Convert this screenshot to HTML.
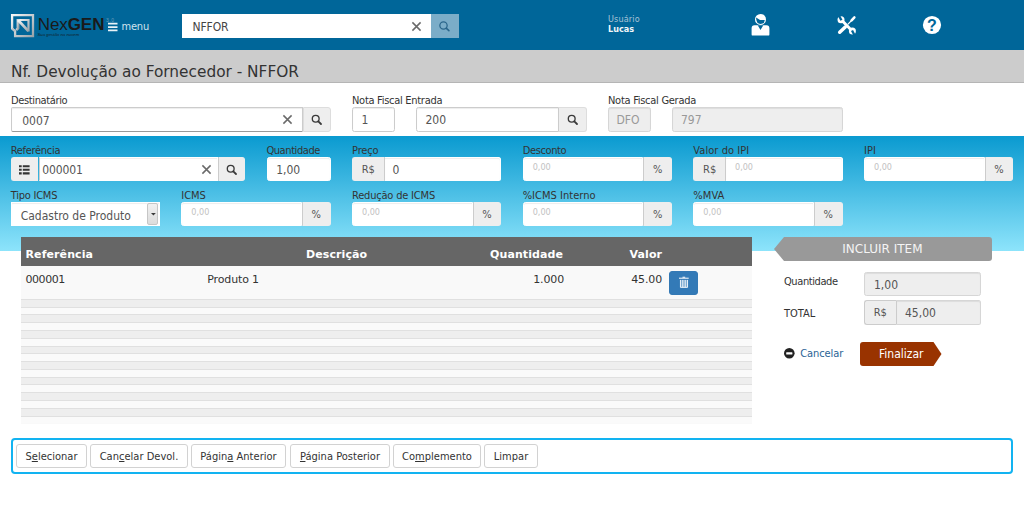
<!DOCTYPE html>
<html lang="pt-BR">
<head>
<meta charset="utf-8">
<title>Nf. Devolução ao Fornecedor - NFFOR</title>
<style>
*{box-sizing:border-box;margin:0;padding:0}
html,body{width:1024px;height:523px;overflow:hidden;background:#fff}
body{position:relative;font-variant-ligatures:none;font-family:"DejaVu Sans Condensed","Liberation Sans",sans-serif;font-size:11px;color:#333}
.abs{position:absolute}
#hdr{left:0;top:0;width:1024px;height:50px;background:#006699}
#titlebar{left:0;top:50px;width:1024px;height:33px;background:#cccccc;border-bottom:1px solid #b5b5b5}
#titlebar span{position:absolute;left:11px;top:11.500px;font-size:16.400px;line-height:20px;color:#333;white-space:nowrap;transform:scaleX(1.04);transform-origin:0 0;font-variant-ligatures:none}
#blue{left:0;top:136.200px;width:1024px;height:115px;background:linear-gradient(#0a9ad0,#8de4fb)}
.lbl{position:absolute;font-size:11px;line-height:13px;color:#333;white-space:nowrap;letter-spacing:-0.280px;font-variant-ligatures:none}
.inp{position:absolute;height:24.400px;background:#fff;border:1px solid #ccc;border-radius:2.500px;font-size:12px;line-height:24.600px;color:#555;padding-left:11px;white-space:nowrap;overflow:hidden;box-shadow:inset 0 1px 1px rgba(0,0,0,.075)}
.inp.dis{background:#eee;color:#999;border-color:#d6d6d6}
.inp.ph{color:#c2c2c2;font-size:9px;line-height:20px;padding-left:9px}
.add{position:absolute;height:24.400px;background:#eee;border:1px solid #ddd;font-size:11px;line-height:23px;color:#555;text-align:center}
.nl{border-top-left-radius:0;border-bottom-left-radius:0;border-left:0}
.nr{border-top-right-radius:0;border-bottom-right-radius:0}
.rl{border-radius:3px 0 0 3px;border-right:0}
.rr{border-radius:0 3px 3px 0;border-left:0}
.bl .inp,.bl .add{height:24px;border-color:#fff}
.bl .add{border-color:#eee;line-height:24px}
.bl .inp{line-height:25.500px}
.sq{border-radius:0}
.bl .inp.ph{line-height:18.500px}
svg{position:absolute;overflow:visible}
.btn{position:absolute;top:444px;height:24px;border:1px solid #d2d2d2;border-radius:3px;background:#fff;font-size:11px;line-height:24px;color:#333;text-align:center;white-space:nowrap;letter-spacing:0.020px}
.btn u{text-decoration:underline}
#tbl{left:21.330px;top:236.900px;width:730.670px;height:186.700px;background:#f9f9f9;font-family:"DejaVu Sans","Liberation Sans",sans-serif}
#thead{left:0;top:0;width:730.670px;height:29.100px;background:#666}
#thead span{position:absolute;top:10px;font-size:11px;line-height:16px;font-weight:bold;color:#fff;white-space:nowrap;letter-spacing:0.100px}
.td{position:absolute;top:35.800px;font-size:11px;line-height:14px;color:#333;white-space:nowrap;letter-spacing:-0.150px}
.st{position:absolute;left:0;width:730.670px;height:7.780px;border-top:1px solid #e0e0e0}
.st.g{background:#eee}.st.w{background:#fafafa}
</style>
</head>
<body>
<!-- header -->
<div id="hdr" class="abs">
  <!-- logo -->
  <svg style="left:10px;top:13px" width="26" height="26" viewBox="10 13 26 26">
    <defs><linearGradient id="lg" x1="0" y1="0" x2="1" y2="1"><stop offset="0" stop-color="#f4f6f7"/><stop offset="0.55" stop-color="#c3c9cd"/><stop offset="1" stop-color="#9aa3a9"/></linearGradient></defs>
    <path d="M12.100 28.500V15.100H33V36.200H15.100V31.200Z" fill="none" stroke="url(#lg)" stroke-width="2.300" stroke-linejoin="miter"/>
    <path d="M12.100 28.600L15.200 31.300" fill="none" stroke="#b9c0c5" stroke-width="2"/>
    <path d="M18 28.600V20H28.500V31.600" fill="none" stroke="url(#lg)" stroke-width="2.200"/>
    <path d="M18 19.100V28.400L16.200 30.200" fill="none" stroke="url(#lg)" stroke-width="2.600"/>
    <path d="M18 20L28.400 31.200" fill="none" stroke="url(#lg)" stroke-width="2.700"/>
  </svg>
  <span class="abs" style="left:37.700px;top:13.200px;font-family:'Liberation Sans',sans-serif;font-size:17px;line-height:24px;color:#1a1a1a;letter-spacing:-0.070px;white-space:nowrap">Nex<b>GEN</b></span>
  <span class="abs" style="left:37.500px;top:31.500px;font-family:'Liberation Sans',sans-serif;font-size:4.300px;line-height:5px;color:#14242d;font-style:italic;white-space:nowrap">Sua gestão na nuvem</span>
  <span class="abs" style="left:106px;top:16.500px;font-family:'Liberation Sans',sans-serif;font-size:5px;line-height:6px;color:#6d9cb8;white-space:nowrap;letter-spacing:0.6px">3.0</span>
  <svg style="left:107.500px;top:22px" width="9.500" height="10" viewBox="0 0 9.500 10"><path d="M0 1.500h9.500M0 5h9.500M0 8.400h9.500" stroke="#e9f2f7" stroke-width="1.750"/></svg>
  <span class="abs" style="left:121.500px;top:20px;font-size:11px;line-height:14px;color:#cfe3ee;white-space:nowrap;letter-spacing:-0.200px">menu</span>
  <!-- search -->
  <div class="abs" style="left:181.700px;top:14.300px;width:249.300px;height:23.800px;background:#fff"></div>
  <span class="abs" style="left:192.500px;top:20px;font-size:12px;line-height:15px;color:#444;white-space:nowrap;letter-spacing:-0.100px">NFFOR</span>
  <svg style="left:411.500px;top:22px" width="9" height="9" viewBox="0 0 9 9"><path d="M0.400 0.400L8.600 8.600M8.600 0.400L0.400 8.600" stroke="#6a6a6a" stroke-width="1.500"/></svg>
  <div class="abs" style="left:431px;top:14.300px;width:27.800px;height:23.800px;background:#7badc8"></div>
  <svg style="left:438px;top:20px" width="12" height="12" viewBox="438 20 12 12"><circle cx="443.500" cy="25.500" r="3.650" fill="none" stroke="#2a668b" stroke-width="1.250"/><path d="M446.200 28.200L448.900 30.700" stroke="#2a668b" stroke-width="1.600" stroke-linecap="round"/></svg>
  <!-- user -->
  <span class="abs" id="usu" style="left:608px;top:14px;font-size:9px;line-height:10px;color:#a8c3d6;white-space:nowrap;letter-spacing:0.150px">Usuário</span>
  <span class="abs" id="luc" style="left:608px;top:23px;font-size:9px;line-height:12px;font-weight:bold;color:#f2f7fa;white-space:nowrap;letter-spacing:0px">Lucas</span>
  <!-- user icon -->
  <svg style="left:745px;top:10px" width="30" height="30" viewBox="745 10 30 30">
    <path d="M751.600 35.600V28.200Q751.600 25.300 754.500 25.300H766.500Q769.400 25.300 769.400 28.200V34.400Q769.400 35.600 768.200 35.600H752.800Q751.600 35.600 751.600 34.400Z" fill="#fff"/>
    <path d="M757.700 25.200L760.500 30.100L763.300 25.200Z" fill="#006699"/>
    <circle cx="760.500" cy="19.400" r="5.500" fill="#fff"/>
    <path d="M756.100 17.400Q759.500 20.600 764.800 20Q764.500 24 760.500 24Q756 23.800 756.100 17.400Z" fill="#006699"/>
  </svg>
  <!-- tools icon -->
  <svg style="left:832px;top:10px" width="30" height="30" viewBox="832 10 30 30">
    <path d="M845.300 27L839.700 32.200" stroke="#fff" stroke-width="3.500" stroke-linecap="round"/>
    <path d="M847.800 24.400L853 19" stroke="#fff" stroke-width="1.200"/>
    <path d="M851.600 20.400L854.400 17.400" stroke="#fff" stroke-width="2.500" stroke-linecap="round"/>
    <path d="M842 20.600L851.400 30.200" stroke="#fff" stroke-width="2.900"/>
    <circle cx="841" cy="19.700" r="3.500" fill="#fff"/>
    <path d="M841.400 20.200L838.600 15" stroke="#006699" stroke-width="2.400"/>
    <circle cx="852.400" cy="31" r="3.500" fill="#fff"/>
    <path d="M852 30.500L854.800 35.700" stroke="#006699" stroke-width="2.400"/>
  </svg>
  <!-- help icon -->
  <svg style="left:922px;top:15px" width="20" height="20" viewBox="922 15 20 20"><circle cx="932" cy="25" r="9.100" fill="#fff"/>
    <text x="932" y="30.900" text-anchor="middle" font-family="Liberation Sans, sans-serif" font-weight="bold" font-size="16" fill="#006699">?</text></svg>
</div>

<div id="titlebar" class="abs"><span>Nf. Devolução ao Fornecedor - NFFOR</span></div>

<!-- row 1 -->
<span class="lbl" style="left:11px;top:94px;letter-spacing:-0.367px">Destinatário</span>
<div class="inp nr" style="left:10.700px;top:107.300px;width:292px;padding-left:10.500px;border-bottom-color:#999;line-height:26px;border-radius:2px 0 0 2px">0007</div>
<svg style="left:283px;top:115px" width="9" height="9" viewBox="0 0 9 9"><path d="M0.400 0.400L8.600 8.600M8.600 0.400L0.400 8.600" stroke="#6a6a6a" stroke-width="1.500"/></svg>
<div class="add rr" style="left:302.700px;top:107.300px;width:28px;border-left:1px solid #ddd"></div>
<svg class="mg" style="left:311px;top:114px" width="11" height="11" viewBox="0 0 11 11"><circle cx="4.700" cy="4.700" r="3.400" fill="none" stroke="#3a3a3a" stroke-width="1.350"/><path d="M7.300 7.300L10 10" stroke="#3a3a3a" stroke-width="1.800" stroke-linecap="round"/></svg>

<span class="lbl" style="left:352px;top:94px;letter-spacing:-0.286px">Nota Fiscal Entrada</span>
<div class="inp" style="left:352px;top:107.300px;width:42.700px;padding-left:8.500px">1</div>
<div class="inp nr" style="left:416px;top:107.300px;width:142.700px;padding-left:8.500px">200</div>
<div class="add rr" style="left:558.700px;top:107.300px;width:28px"></div>
<svg class="mg" style="left:567px;top:114px" width="11" height="11" viewBox="0 0 11 11"><circle cx="4.700" cy="4.700" r="3.400" fill="none" stroke="#3a3a3a" stroke-width="1.350"/><path d="M7.300 7.300L10 10" stroke="#3a3a3a" stroke-width="1.800" stroke-linecap="round"/></svg>

<span class="lbl" style="left:608px;top:94px;letter-spacing:-0.277px">Nota Fiscal Gerada</span>
<div class="inp dis" style="left:608px;top:107.300px;width:42.700px;padding-left:7.500px">DFO</div>
<div class="inp dis" style="left:672px;top:107.300px;width:170.700px;padding-left:8px">797</div>

<!-- blue panel -->
<div id="blue" class="abs"></div>
<div class="bl">
<!-- row 2 -->
<span class="lbl" style="left:10.700px;top:144px;letter-spacing:-0.300px">Referência</span>
<div class="add rl" style="left:10.67px;top:157.3px;width:27.83px;"></div>
<svg style="left:19.400px;top:165px" width="11" height="10" viewBox="0 0 11 10"><path d="M0 1.200h2.700M3.800 1.200H10.600M0 4.800h2.700M3.800 4.800H10.600M0 8.400h2.700M3.800 8.400H10.600" stroke="#333" stroke-width="2.100"/></svg>
<div class="inp sq" style="left:38.5px;top:157.3px;width:179px;padding-left:2.800px;letter-spacing:-0.150px;border-left:1px solid #ccc">000001</div>
<svg style="left:201.500px;top:165.300px" width="9" height="9" viewBox="0 0 9 9"><path d="M0.400 0.400L8.600 8.600M8.600 0.400L0.400 8.600" stroke="#6a6a6a" stroke-width="1.500"/></svg>
<div class="add rr" style="left:217.5px;top:157.3px;width:27.83px;border-left:1px solid #ccc"></div>
<svg class="mg" style="left:225.600px;top:164.400px" width="11" height="11" viewBox="0 0 11 11"><circle cx="4.700" cy="4.700" r="3.400" fill="none" stroke="#3a3a3a" stroke-width="1.350"/><path d="M7.300 7.300L10 10" stroke="#3a3a3a" stroke-width="1.800" stroke-linecap="round"/></svg>
<span class="lbl" style="left:266.400px;top:144px;letter-spacing:-0.415px">Quantidade</span>
<div class="inp" style="left:266.67px;top:157.3px;width:64px;padding-left:8.500px">1,00</div>
<span class="lbl" style="left:352px;top:144px;letter-spacing:-0.140px">Preço</span>
<div class="add rl" style="left:352px;top:157.3px;width:31.6px;">R$</div>
<div class="inp nl" style="left:383.6px;top:157.3px;width:117.73px;padding-left:8px;border-left:1px solid #ccc">0</div>
<span class="lbl" style="left:522.700px;top:144px;letter-spacing:-0.385px">Desconto</span>
<div class="inp ph nr" style="left:522.67px;top:157.3px;width:120.53px;">0,00</div>
<div class="add rr" style="left:643.2px;top:157.3px;width:28.8px;border-left:1px solid #ccc">%</div>
<span class="lbl" style="left:693.300px;top:144px;letter-spacing:0.060px">Valor do IPI</span>
<div class="add rl" style="left:693.33px;top:157.3px;width:31.67px;">R$</div>
<div class="inp ph nl" style="left:725px;top:157.3px;width:117.67px;border-left:1px solid #ccc">0,00</div>
<span class="lbl" style="left:864px;top:144px;letter-spacing:0.060px">IPI</span>
<div class="inp ph nr" style="left:864px;top:157.3px;width:120.53px;">0,00</div>
<div class="add rr" style="left:984.53px;top:157.3px;width:28.8px;border-left:1px solid #ccc">%</div>
<!-- row 3 -->
<span class="lbl" style="left:10.700px;top:189px;letter-spacing:-0.233px">Tipo ICMS</span>
<div class="inp sq" style="left:10.67px;top:202.2px;width:149.330px;padding-left:9px;line-height:26px">Cadastro de Produto</div>
<div class="abs" style="left:147.300px;top:203.400px;width:11.200px;height:21.500px;background:linear-gradient(#f1f1f1,#dcdcdc);border:1px solid #c6c6c6;border-radius:2px"></div>
<svg style="left:150.500px;top:213px" width="4.800" height="2.400" viewBox="0 0 6 3"><path d="M0 0h6L3 3z" fill="#3a3a3a"/></svg>
<span class="lbl" style="left:181.33px;top:189px;letter-spacing:-0.040px">ICMS</span>
<div class="inp ph nr" style="left:181.33px;top:202.2px;width:120.54px;">0,00</div>
<div class="add rr" style="left:301.87px;top:202.2px;width:28.8px;border-left:1px solid #ccc">%</div>
<span class="lbl" style="left:352px;top:189px;letter-spacing:-0.194px">Redução de ICMS</span>
<div class="inp ph nr" style="left:352px;top:202.2px;width:120.53px;">0,00</div>
<div class="add rr" style="left:472.53px;top:202.2px;width:28.8px;border-left:1px solid #ccc">%</div>
<span class="lbl" style="left:522.67px;top:189px;letter-spacing:0.034px">%ICMS Interno</span>
<div class="inp ph nr" style="left:522.67px;top:202.2px;width:120.53px;">0,00</div>
<div class="add rr" style="left:643.2px;top:202.2px;width:28.8px;border-left:1px solid #ccc">%</div>
<span class="lbl" style="left:693.33px;top:189px;letter-spacing:0.055px">%MVA</span>
<div class="inp ph nr" style="left:693.33px;top:202.2px;width:120.54px;">0,00</div>
<div class="add rr" style="left:813.87px;top:202.2px;width:28.8px;border-left:1px solid #ccc">%</div>
</div>

<!-- table -->
<div id="tbl" class="abs">
  <div id="thead" class="abs">
    <span id="h1" style="left:4.200px">Referência</span>
    <span id="h2" style="left:284.700px">Descrição</span>
    <span id="h3" style="left:468.700px">Quantidade</span>
    <span id="h4" style="left:608.200px">Valor</span>
  </div>
  <div class="st g" style="top:62.00px"></div>
  <div class="st w" style="top:69.78px"></div>
  <div class="st g" style="top:77.56px"></div>
  <div class="st w" style="top:85.34px"></div>
  <div class="st g" style="top:93.12px"></div>
  <div class="st w" style="top:100.90px"></div>
  <div class="st g" style="top:108.68px"></div>
  <div class="st w" style="top:116.46px"></div>
  <div class="st g" style="top:124.24px"></div>
  <div class="st w" style="top:132.02px"></div>
  <div class="st g" style="top:139.80px"></div>
  <div class="st w" style="top:147.58px"></div>
  <div class="st g" style="top:155.36px"></div>
  <div class="st w" style="top:163.14px"></div>
  <div class="st g" style="top:170.92px"></div>
  <div class="st w" style="top:178.70px"></div>
  <span class="td" style="left:4.200px;letter-spacing:-0.450px">000001</span>
  <span class="td" style="left:186px">Produto 1</span>
  <span class="td" style="right:188px">1.000</span>
  <span class="td" style="right:90px">45.00</span>
  <div class="abs" style="left:648px;top:34px;width:28.300px;height:24.200px;background:#337ab7;border:1px solid #3479b5;border-radius:3px"></div>
  <svg style="left:656.670px;top:39.100px" width="12" height="13" viewBox="678 276 12 13"><rect x="679" y="277.700" width="9.700" height="1" fill="#fff"/><rect x="682.500" y="276.700" width="2.700" height="1.200" fill="#e6eef6"/><path d="M680.450 279.900V287.350H687.550V279.900" fill="rgba(255,255,255,0.35)" stroke="#fff" stroke-width="0.900"/><path d="M682.800 279.900V287.300M685.200 279.900V287.300" stroke="#fff" stroke-width="0.900"/></svg>
</div>

<!-- right panel -->
<svg style="left:774px;top:237px" width="218" height="24" viewBox="0 0 218 24"><path d="M0 12L10 0H215Q218 0 218 3V21Q218 24 215 24H10Z" fill="#999"/></svg>
<span class="abs" style="left:842.300px;top:241.500px;font-family:'DejaVu Sans',sans-serif;font-size:12px;line-height:15px;color:#f4f4f4;white-space:nowrap">INCLUIR ITEM</span>
<span class="lbl" style="left:784px;top:275px;letter-spacing:-0.415px">Quantidade</span>
<div class="inp dis" style="left:864px;top:272px;width:117.300px;color:#555;padding-left:9px">1,00</div>
<span class="lbl" style="left:784px;top:307px;letter-spacing:0.000px">TOTAL</span>
<div class="add rl" style="left:864px;top:300.200px;width:31.500px;border-color:#ccc;border-right:0">R$</div>
<div class="inp dis nl" style="left:895.500px;top:300.200px;width:85.800px;color:#555;padding-left:8.500px;border-left:1px solid #ccc">45,00</div>
<svg style="left:784.100px;top:347.500px" width="10.600" height="10.600" viewBox="0 0 10.600 10.600"><circle cx="5.300" cy="5.300" r="5.300" fill="#222"/><rect x="2.200" y="4.200" width="6.200" height="2.200" rx="0.500" fill="#fff"/></svg>
<span class="abs" style="left:800.300px;top:347px;font-size:11px;line-height:14px;color:#2a6496;white-space:nowrap;letter-spacing:-0.100px">Cancelar</span>
<svg style="left:860px;top:342px" width="82" height="24" viewBox="0 0 82 24"><path d="M3 0H73.500L81.500 12L73.500 24H3Q0 24 0 21V3Q0 0 3 0Z" fill="#993300"/></svg>
<span class="abs" style="left:879px;top:346.800px;font-size:12px;line-height:15px;color:#fff;white-space:nowrap">Finalizar</span>

<!-- toolbar -->
<div class="abs" style="left:10.670px;top:438.200px;width:1002.670px;height:35.500px;border:2px solid #12b3f1;border-radius:4px"></div>
<div class="btn" style="left:16px;width:71px">S<u>e</u>lecionar</div>
<div class="btn" style="left:90px;width:98px">Can<u>c</u>elar Devol.</div>
<div class="btn" style="left:191px;width:95px">Págin<u>a</u> Anterior</div>
<div class="btn" style="left:290px;width:100px"><u>P</u>ágina Posterior</div>
<div class="btn" style="left:393px;width:88px">Co<u>m</u>plemento</div>
<div class="btn" style="left:484px;width:54px">Limpar</div>
</body>
</html>
